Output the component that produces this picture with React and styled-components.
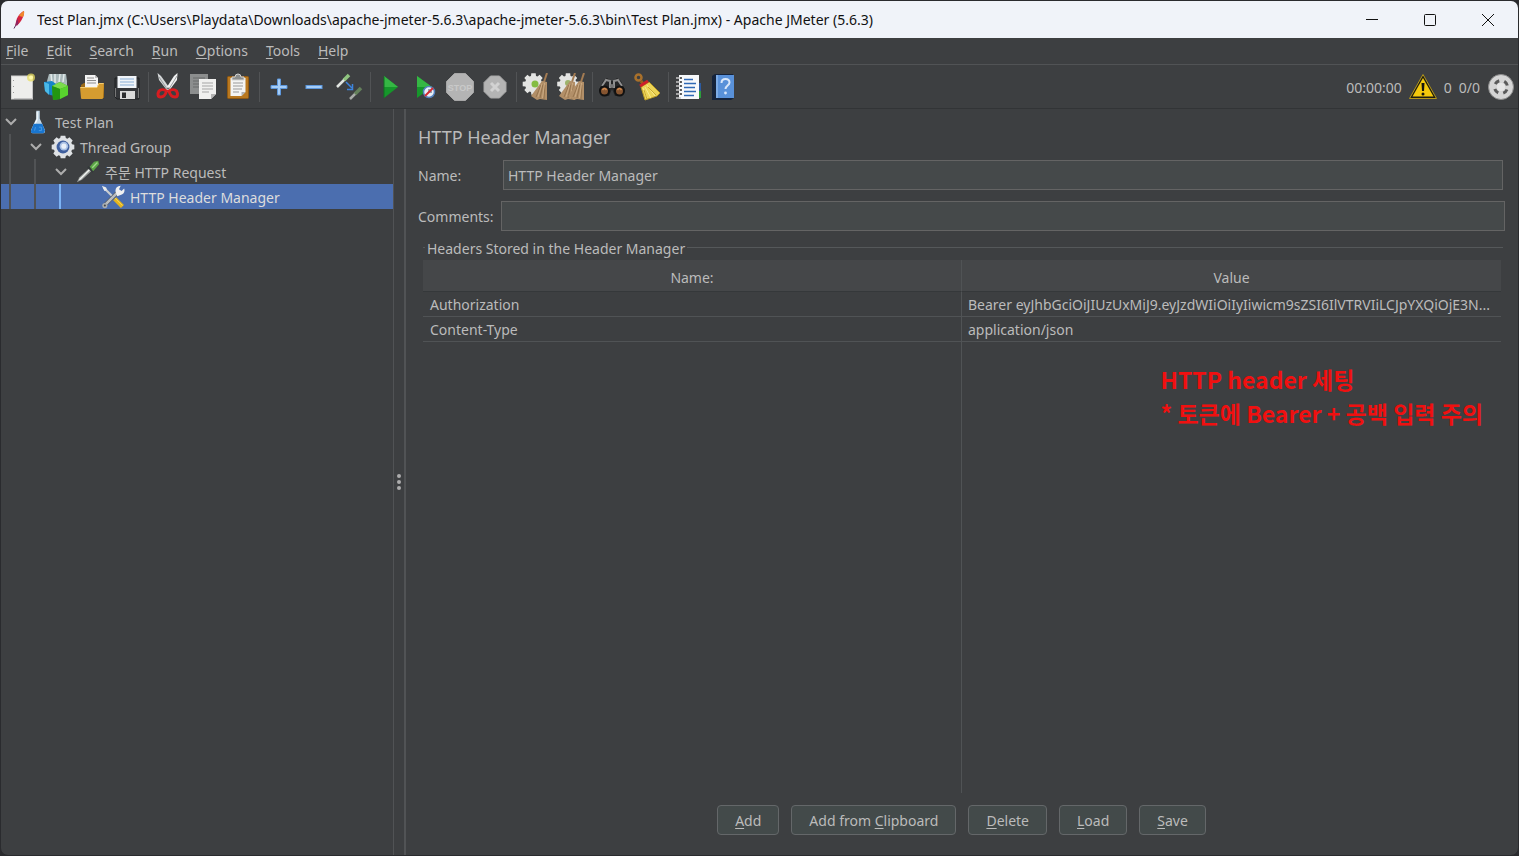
import React, { useState } from 'react'
import styled, { createGlobalStyle } from 'styled-components'

const GlobalStyle = createGlobalStyle`
  *, *::before, *::after {
    box-sizing: border-box;
  }
  body {
    margin: 0;
    background: #2a2b2e;
    font-family: "Noto Sans", "Noto Sans CJK KR", sans-serif;
    font-size: 14px;
    line-height: 20px;
    color: #bbbbbb;
  }
  button, input {
    font: inherit;
    color: inherit;
  }
`

// ---------- icons ----------

const Svg = ({ size = 28, children }) => (
  <svg width={size} height={size} viewBox="0 0 28 28" fill="none" aria-hidden="true">{children}</svg>
)

const gearPath = (cx, cy, outer, inner, teeth = 8) => {
  const points = []
  for (let i = 0; i < teeth; i++) {
    const a = (i / teeth) * Math.PI * 2
    const offsets = [[-0.3, inner], [-0.2, outer], [0.2, outer], [0.3, inner]]
    offsets.forEach(([d, r]) => {
      points.push(`${(cx + Math.cos(a + d) * r).toFixed(1)} ${(cy + Math.sin(a + d) * r).toFixed(1)}`)
    })
  }
  return `M${points.join('L')}Z`
}

const FeatherIcon = () => (
  <svg width="16" height="20" viewBox="0 0 16 20" fill="none" aria-hidden="true">
    <path d="M3 18.500L6 13" stroke="#5b2a5c" strokeWidth="1" />
    <path d="M4.500 15C5 9 7.500 3.500 13 1C13.500 5 11 11 6 15.500Z" fill="#d3223f" />
    <path d="M8 6C9.500 3.500 11 2 13 1C13.400 3 13 5 12 7Z" fill="#f0882c" />
    <path d="M4.500 15C5 12 5.500 10.500 6.500 8.500L7.500 13.500L6 15.500Z" fill="#8d2463" />
  </svg>
)

const NewIcon = () => (
  <Svg>
    <rect x="3.500" y="3" width="21" height="23" fill="#eeeeec" stroke="#d2d2d0" />
    <path d="M5.500 7v1M5.500 13v1M5.500 19v1" stroke="#999" />
    <path d="M6 25.500h18.500V8" stroke="#c3c3c3" />
    <circle cx="23" cy="4.500" r="4" fill="#e8de62" opacity=".75" />
    <circle cx="23" cy="4.500" r="2" fill="#fff8a8" />
  </Svg>
)

const TemplatesIcon = () => (
  <Svg>
    <path d="M4 8L6 1h17l1 7v6H4Z" fill="#a9b8ba" />
    <path d="M8 1l1 9M12 1v9M17 1l-1 8M21 1l-1 8" stroke="#e3eaea" strokeWidth="1.500" />
    <path d="M1 9l8-1 4 3v12l-6-1-5-4Z" fill="#1585c9" />
    <path d="M1 9l5 2v11l-4-4Z" fill="#4bb9e8" />
    <path d="M9 13l8-4 8 4v9l-8 4-7 1Z" fill="#35a51b" />
    <path d="M9 13l8-4 8 4-8 3Z" fill="#7bdc4c" />
    <path d="M17 16l8-3v9l-8 4Z" fill="#58d22e" />
    <path d="M9 13l8 3v10l-7 1Z" fill="#239611" />
  </Svg>
)

const OpenIcon = () => (
  <Svg>
    <path d="M3 12l3-2h18l2 3v12H3Z" fill="#9b6a18" />
    <path d="M7 2h10l3 3v11H7Z" fill="#f4f4f4" />
    <path d="M17 2l3 3h-3Z" fill="#bcbcbc" />
    <path d="M9 5h7M9 7.500h9M9 10h9" stroke="#8e8e8e" />
    <path d="M2 14h17l2-4h5l-1 15q0 1-1 1H4q-1 0-1-1Z" fill="#d59c30" />
    <path d="M2.500 14.500h16.500l2-4h4.500" stroke="#f2cb73" />
  </Svg>
)

const SaveIcon = () => (
  <Svg>
    <path d="M2 5h24v21H4l-2-2Z" fill="#343639" stroke="#1f2022" />
    <rect x="4.500" y="3" width="19" height="12" fill="#f0f4f8" />
    <path d="M7 6h14M7 9h14M7 12h14" stroke="#89aed6" />
    <rect x="7" y="18" width="15" height="8" fill="#d9d9d9" />
    <rect x="9" y="19.500" width="4" height="5.500" fill="#2b2c2e" />
    <path d="M2.500 15v9M25.500 15v10" stroke="#777" />
  </Svg>
)

const CutIcon = () => (
  <Svg>
    <path d="M3.500 0L7 3l10 14-3 1.500L5 7Z" fill="#d5d8d9" />
    <path d="M23.500 0L20 3 11 17l3 2L23 7Z" fill="#f1f2f2" />
    <path d="M23 3l-8 13M5 4l8 12" stroke="#979b9d" />
    <path d="M12.500 18c-2-1.500-5.500-2-7.500 0-1.500 2.500-1.500 6 1.500 6s5-2 6-6Z" stroke="#d81c20" strokeWidth="3" />
    <path d="M15 18c2-1.500 5.500-2 7.500 0 1.500 2.500 1.500 6-1.500 6s-5-2-6-6Z" stroke="#d81c20" strokeWidth="3" />
    <circle cx="14" cy="15.500" r="1" fill="#666" />
  </Svg>
)

const CopyIcon = () => (
  <Svg>
    <path d="M1 1h18v20H1Z" fill="#8c8e8e" />
    <path d="M4 5h12M4 8h12M4 11h6M4 14h6" stroke="#696b6b" />
    <path d="M10 6h17v15l-5 5H10Z" fill="#f0f0ef" />
    <path d="M22 26v-5h5Z" fill="#b3b3b3" />
    <path d="M13 10h11M13 13h11M13 16h11M13 19h7" stroke="#a5a5a5" />
  </Svg>
)

const PasteIcon = () => (
  <Svg>
    <rect x="3.500" y="3.500" width="21" height="22" rx="1" fill="#b9781f" stroke="#8f5812" />
    <path d="M6.500 5h15v14l-4 4h-11Z" fill="#f4f4f3" />
    <path d="M17.500 23v-4h4Z" fill="#b1b1b1" />
    <path d="M9 10h10M9 13h10M9 16h9M9 19h6" stroke="#999" />
    <path d="M8 7V4h3q0-3 3-3t3 3h3v3Z" fill="#8b8e8e" stroke="#d2d3d3" />
  </Svg>
)

const PlusIcon = () => (
  <Svg>
    <path d="M12.500 6h3v6.500H22v3h-6.500V22h-3v-6.500H6v-3h6.500Z" fill="#a5cdf7" stroke="#5d97dc" />
  </Svg>
)

const MinusIcon = () => (
  <Svg>
    <rect x="6" y="12.500" width="16" height="3" fill="#a5cdf7" stroke="#5d97dc" />
  </Svg>
)

const ToggleIcon = () => (
  <Svg>
    <path d="M2 14l8-8" stroke="#e2e6e2" strokeWidth="2.500" />
    <path d="M9 7l5-5" stroke="#8fc47f" strokeWidth="3.500" />
    <path d="M11 9l6 6" stroke="#3d84de" strokeWidth="1.500" />
    <path d="M17.500 11v5.500h-5.500" stroke="#3d84de" strokeWidth="1.500" />
    <path d="M15 26l6-6" stroke="#a9aca9" strokeWidth="2.500" />
    <path d="M20 21l6-6" stroke="#64805b" strokeWidth="3.500" />
  </Svg>
)

const PlayIcon = () => (
  <Svg>
    <path d="M8 3l14 11L8 25Z" fill="#16962b" />
    <path d="M8 3l14 11H8Z" fill="#35b744" />
    <path d="M8 3.500V25" stroke="#0f7020" />
  </Svg>
)

const PlayNoTimersIcon = () => (
  <Svg>
    <path d="M6 3l15 11L6 25Z" fill="#16962b" />
    <path d="M6 3l15 11H6Z" fill="#35b744" />
    <circle cx="18" cy="19" r="5.500" fill="#e9eff8" stroke="#5380bd" strokeWidth="1.500" />
    <path d="M18 16v3h3" stroke="#456" />
    <path d="M14 23l8-8" stroke="#d22b31" strokeWidth="2" />
  </Svg>
)

const StopIcon = () => (
  <Svg>
    <path d="M8.500 0.500h11l8 8v11l-8 8h-11l-8-8v-11Z" fill="#b4b4b4" stroke="#a6a6a6" />
    <text x="14" y="17.500" textAnchor="middle" fontSize="9" fontFamily="Liberation Sans" fontWeight="700" fill="#c9c9c9">STOP</text>
  </Svg>
)

const ShutdownIcon = () => (
  <Svg>
    <path d="M9.500 3h9l6.500 6.500v9L18.500 25h-9L3 18.500v-9Z" fill="#b4b4b4" stroke="#a8a8a8" />
    <path d="M10 10l8 8M18 10l-8 8" stroke="#d2d2d2" strokeWidth="3" />
  </Svg>
)

const Broomlet = ({ x = 0 }) => (
  <g transform={`translate(${x} 0)`}>
    <path d="M25 0l-3 9" stroke="#a37b52" strokeWidth="2" />
    <path d="M20 8l5 1v18l-7-1-3 1-6-4Z" fill="#b28f68" />
    <path d="M19 12l-5 12M21 11l-3 14M23 12l-1 14" stroke="#96744e" />
    <path d="M20 11l-4 13M22.500 10l-2 15" stroke="#cbaa82" />
  </g>
)

const ClearIcon = () => (
  <Svg>
    <path d={gearPath(11.5, 11, 11, 8.5)} fill="#e3e4e2" />
    <circle cx="13" cy="11" r="3.500" fill="#84bd42" />
    <Broomlet />
  </Svg>
)

const ClearAllIcon = () => (
  <Svg>
    <path d={gearPath(11, 11, 11, 8.5)} fill="#e3e4e2" />
    <circle cx="11" cy="10" r="3" fill="#9db36c" />
    <Broomlet x={-7} />
    <Broomlet x={2} />
  </Svg>
)

const SearchIcon = () => (
  <Svg>
    <path d="M5 8l4-3 4 3h2l4-3 4 3 4 9-4 6h-6l-3-7-3 7H5l-4-6Z" fill="#242526" />
    <path d="M4 13l4-6 4 1v7M16 15V8l4-1 4 6" stroke="#8f8f8f" strokeWidth="2" />
    <circle cx="6.500" cy="18" r="4.500" fill="#855430" stroke="#111" strokeWidth="2" />
    <circle cx="21.500" cy="18" r="4.500" fill="#855430" stroke="#111" strokeWidth="2" />
    <path d="M4.500 17q2-3 4 0M19.500 17q2-3 4 0" stroke="#d18b50" strokeWidth="1.500" />
    <circle cx="14" cy="13" r="2" fill="#777" />
  </Svg>
)

const BroomIcon = () => (
  <Svg>
    <path d="M8 8l3 4" stroke="#9a611e" strokeWidth="3" />
    <circle cx="5.500" cy="4.500" r="3" stroke="#a8702b" strokeWidth="2.500" />
    <path d="M8 14l8-5 11 11-3 3-12 4Z" fill="#ecd456" stroke="#b99a25" />
    <path d="M10 15l4 10M12 14l6 11M14 12l8 11" stroke="#f8ea8e" />
    <path d="M11 17l3 9M15 14l8 8" stroke="#c9a82c" />
    <path d="M7 13l8-5" stroke="#ce2029" strokeWidth="3" />
  </Svg>
)

const ListIcon = () => (
  <Svg>
    <path d="M23 10h4v8h-4Z" fill="#2c5ba0" />
    <path d="M23 18h4v7h-4Z" fill="#2c9d3c" />
    <rect x="5" y="2" width="20" height="24" fill="#f7f9fb" />
    <path d="M2 5h5M2 9h5M2 13h5M2 17h5M2 21h5M2 25h5" stroke="#c6c6c6" strokeWidth="1.500" />
    <path d="M6 5h2M6 9h2M6 13h2M6 17h2M6 21h2" stroke="#303030" strokeWidth="1.500" />
    <path d="M10 6.500h9M10 10.500h12M10 14.500h11M10 18.500h12M10 22.500h10" stroke="#2f69b5" strokeWidth="1.500" />
  </Svg>
)

const HelpIcon = () => (
  <Svg>
    <path d="M3 3l3-2h18l1 24-3 2H3Z" fill="#15233b" />
    <rect x="7" y="2" width="18" height="23" fill="#5991d9" />
    <path d="M8 2v23" stroke="#a2c6f2" />
    <path d="M12.500 10q0-4 4-4t4 3.500c0 3-4 3-4 6.500" stroke="#d9e7fa" strokeWidth="2" />
    <circle cx="16.500" cy="20" r="1.400" fill="#d9e7fa" />
  </Svg>
)

const WarningIcon = () => (
  <Svg>
    <path d="M14 1.500L27.500 25.500H.5Z" fill="#1f1d10" stroke="#b6981a" />
    <path d="M14 5L24.500 23.500h-21Z" fill="#f4c90c" />
    <path d="M12.500 10h3l-.500 8h-2Z" fill="#17160e" />
    <circle cx="14" cy="21" r="1.500" fill="#17160e" />
  </Svg>
)

const StatusIcon = () => (
  <Svg>
    <circle cx="14" cy="14" r="12.500" fill="#d5d5d5" stroke="#8d8d8d" />
    <circle cx="14" cy="14" r="6.500" stroke="#5a5a5a" strokeWidth="3" strokeDasharray="5 5.210" strokeDashoffset="-2.600" />
    <circle cx="14" cy="14" r="4" fill="#e6e6e6" />
  </Svg>
)

const FlaskIcon = () => (
  <Svg size={24}>
    <path d="M12 1h4v9l6 13q1 4-2 4H8q-3 0-2-4l6-13Z" fill="#c3d7e6" />
    <path d="M13 2v9l-4 8" stroke="#f7fafc" strokeWidth="1.500" />
    <path d="M9 16h10l3 8q0 3-2 3H8q-3 0-2-3Z" fill="#1976d0" />
    <path d="M11 20l-1 4M15 20h3v4h-3" stroke="#4f9fe6" strokeWidth="1" />
  </Svg>
)

const GearIcon = () => (
  <Svg size={24}>
    <path d={gearPath(14, 14, 13.500, 11)} fill="#dfe2e5" />
    <circle cx="14" cy="14" r="7.500" fill="#3f5f9e" />
    <circle cx="15" cy="13" r="5" fill="#a9c0e4" />
    <circle cx="15" cy="13" r="3" fill="#e9eff8" />
  </Svg>
)

const PipetteIcon = () => (
  <Svg size={24}>
    <path d="M1 26l3-6L16 9l3 3L7 23Z" fill="#9da19e" />
    <path d="M4 23L16 11" stroke="#f4f6f4" strokeWidth="1.500" />
    <path d="M14 8l6 6" stroke="#33383a" strokeWidth="2.500" />
    <path d="M16 8l5-6 5-1 1 4-7 8Z" fill="#5ba346" />
    <path d="M19 9l6-6" stroke="#a0d98a" strokeWidth="1.500" />
  </Svg>
)

const ToolsIcon = () => (
  <Svg size={24}>
    <path d="M3 3l12 12" stroke="#c9cdd0" strokeWidth="2.500" />
    <path d="M1 1l5 2 1 3-3 1Z" fill="#e9ebec" />
    <path d="M16 16l9 9" stroke="#e3b41e" strokeWidth="5" />
    <path d="M16 15l9 9" stroke="#f8dc64" />
    <path d="M3 25L20 8" stroke="#555b60" strokeWidth="4.500" />
    <path d="M3 25L20 8" stroke="#b9bdc0" strokeWidth="3" />
    <path d="M17 8q-1-6 6-7l-2 4 3 2 3-3q2 6-5 8l-3 1Z" fill="#eff0f1" />
    <circle cx="4.500" cy="24" r="3" fill="#a8adb1" />
    <circle cx="4.500" cy="24" r="1.200" fill="#444" />
  </Svg>
)

const Chevron = () => (
  <svg width="12" height="8" viewBox="0 0 12 8" fill="none" aria-hidden="true">
    <path d="M1 1l5 5 5-5" stroke="#adadad" strokeWidth="2" />
  </svg>
)

// ---------- data ----------

const menus = ['File', 'Edit', 'Search', 'Run', 'Options', 'Tools', 'Help']

const toolGroups = [
  [['New', NewIcon], ['Templates', TemplatesIcon], ['Open', OpenIcon], ['Save', SaveIcon]],
  [['Cut', CutIcon], ['Copy', CopyIcon], ['Paste', PasteIcon]],
  [['Expand All', PlusIcon], ['Collapse All', MinusIcon], ['Toggle', ToggleIcon]],
  [['Start', PlayIcon], ['Start no pauses', PlayNoTimersIcon], ['Stop', StopIcon], ['Shutdown', ShutdownIcon]],
  [['Clear', ClearIcon], ['Clear All', ClearAllIcon]],
  [['Search', SearchIcon], ['Reset Search', BroomIcon]],
  [['Function Helper Dialog', ListIcon], ['Help', HelpIcon]],
]

const treeNodes = [
  { label: 'Test Plan', icon: FlaskIcon, level: 0, open: true },
  { label: 'Thread Group', icon: GearIcon, level: 1, open: true },
  { label: '주문 HTTP Request', icon: PipetteIcon, level: 2, open: true },
  { label: 'HTTP Header Manager', icon: ToolsIcon, level: 3 },
]

const headers = [
  { name: 'Authorization', value: 'Bearer eyJhbGciOiJIUzUxMiJ9.eyJzdWIiOiIyIiwicm9sZSI6IlVTRVIiLCJpYXQiOjE3N...' },
  { name: 'Content-Type', value: 'application/json' },
]

// [before, mnemonic, after]
const actions = [
  ['', 'A', 'dd'],
  ['Add from ', 'C', 'lipboard'],
  ['', 'D', 'elete'],
  ['', 'L', 'oad'],
  ['', 'S', 'ave'],
]

const App = () => {
  const [selected, setSelected] = useState(3)
  const [name, setName] = useState('HTTP Header Manager')
  const [comments, setComments] = useState('')

  return (
    <Window>
      <GlobalStyle />

      <TitleBar>
        <FeatherIcon />
        <WindowTitle>Test Plan.jmx (C:\Users\Playdata\Downloads\apache-jmeter-5.6.3\apache-jmeter-5.6.3\bin\Test Plan.jmx) - Apache JMeter (5.6.3)</WindowTitle>
        <WindowButton aria-label="Minimize">
          <svg width="12" height="12" viewBox="0 0 12 12"><path d="M0 5.500h12" stroke="#111" /></svg>
        </WindowButton>
        <WindowButton aria-label="Maximize">
          <svg width="12" height="12" viewBox="0 0 12 12"><rect x=".5" y=".5" width="11" height="11" rx="1" fill="none" stroke="#111" /></svg>
        </WindowButton>
        <WindowButton aria-label="Close">
          <svg width="12" height="12" viewBox="0 0 12 12"><path d="M0 0l12 12M12 0L0 12" stroke="#111" /></svg>
        </WindowButton>
      </TitleBar>

      <MenuBar>
        {menus.map((menu) => (
          <MenuButton key={menu}><Mnemonic>{menu[0]}</Mnemonic>{menu.slice(1)}</MenuButton>
        ))}
      </MenuBar>

      <Toolbar>
        {toolGroups.map((group, i) => (
          <ToolGroup key={i}>
            {group.map(([label, Icon]) => (
              <ToolButton key={label} aria-label={label} title={label}><Icon /></ToolButton>
            ))}
          </ToolGroup>
        ))}
        <Status>
          <span>00:00:00</span>
          <WarningIcon />
          <span>0</span>
          <span>0/0</span>
          <StatusIcon />
        </Status>
      </Toolbar>

      <Main>
        <Tree>
          {treeNodes.map(({ label, icon: Icon, level, open }, i) => (
            <TreeRow key={label} $selected={selected === i} onClick={() => setSelected(i)}>
              {Array.from({ length: level }, (_, n) => (
                <Guide key={n} $active={selected === i && n === level - 1} />
              ))}
              <Toggle>{open && <Chevron />}</Toggle>
              <Icon />
              <TreeLabel>{label}</TreeLabel>
            </TreeRow>
          ))}
        </Tree>

        <Divider>
          <Dot /><Dot /><Dot />
        </Divider>

        <Panel>
          <PanelTitle>HTTP Header Manager</PanelTitle>
          <Field>
            <FieldLabel htmlFor="name" $wide>Name:</FieldLabel>
            <TextInput id="name" value={name} onChange={(e) => setName(e.target.value)} />
          </Field>
          <Field $outer>
            <FieldLabel htmlFor="comments">Comments:</FieldLabel>
            <TextInput id="comments" value={comments} onChange={(e) => setComments(e.target.value)} />
          </Field>

          <GroupTitle id="headers-title">Headers Stored in the Header Manager</GroupTitle>
          <TableArea>
            <HeaderTable aria-labelledby="headers-title">
              <thead>
                <tr>
                  <th>Name:</th>
                  <th>Value</th>
                </tr>
              </thead>
              <tbody>
                {headers.map((header) => (
                  <tr key={header.name}>
                    <td>{header.name}</td>
                    <td>{header.value}</td>
                  </tr>
                ))}
              </tbody>
            </HeaderTable>
            <EmptyColumns><span /><span /></EmptyColumns>
            <Note>
              HTTP header 세팅<br />
              * 토큰에 Bearer + 공백 입력 주의
            </Note>
          </TableArea>

          <Actions>
            {actions.map(([before, key, after]) => (
              <ActionButton key={before + key + after}>{before}<Mnemonic>{key}</Mnemonic>{after}</ActionButton>
            ))}
          </Actions>
        </Panel>
      </Main>
    </Window>
  )
}

const Window = styled.div`
  display: flex;
  flex-direction: column;
  min-height: 100vh;
  border: 1px solid #2a2b2e;
  border-radius: 8px;
  overflow: hidden;
  background: #3d3f41;
`
const TitleBar = styled.header`
  display: flex;
  align-items: center;
  height: 37px;
  padding: 0 1px 0 10px;
  background: #f0f3f9;
  color: #111;
`
const WindowTitle = styled.div`
  flex: 1;
  min-width: 0;
  margin-left: 10px;
  white-space: nowrap;
  overflow: hidden;
`
const WindowButton = styled.button`
  display: flex;
  align-items: center;
  justify-content: center;
  width: 58px;
  height: 100%;
  padding: 0;
  border: none;
  background: none;
  &:hover {
    background: #dfe3ea;
  }
`
const MenuBar = styled.nav`
  display: flex;
  gap: 18px;
  height: 27px;
  padding-left: 5px;
  border-bottom: 1px solid #515355;
`
const MenuButton = styled.button`
  padding: 0;
  border: none;
  background: none;
`
const Mnemonic = styled.span`
  text-decoration: underline;
  text-decoration-thickness: 1px;
  text-underline-offset: 2px;
`
const Toolbar = styled.div`
  display: flex;
  align-items: center;
  height: 44px;
  padding: 1px 3px 0;
  border-bottom: 1px solid #323436;
`
const ToolGroup = styled.div`
  display: flex;
  & + &::before {
    content: "";
    width: 1px;
    margin: 0 1px 0 4px;
    background: #515355;
  }
`
const ToolButton = styled.button`
  display: flex;
  align-items: center;
  justify-content: center;
  width: 35px;
  height: 30px;
  padding: 0;
  border: none;
  background: none;
`
const Status = styled.div`
  display: flex;
  align-items: center;
  gap: 7px;
  margin-left: auto;
  white-space: nowrap;
  span {
    padding-top: 2px;
  }
`
const Main = styled.main`
  display: flex;
  flex: 1;
`
const Tree = styled.div`
  flex: 0 0 392px;
`
const TreeRow = styled.div`
  display: flex;
  align-items: center;
  height: 25px;
  background: ${({ $selected }) => ($selected ? '#4b6eaf' : 'transparent')};
  color: ${({ $selected }) => ($selected ? '#dddddd' : 'inherit')};
`
const Guide = styled.span`
  width: 25px;
  height: 100%;
  padding-left: 8px;
  &::before {
    content: "";
    display: block;
    width: 2px;
    height: 100%;
    background: ${({ $active }) => ($active ? '#7db4f5' : '#515355')};
  }
`
const Toggle = styled.span`
  display: flex;
  width: 25px;
  padding-left: 4px;
`
const TreeLabel = styled.span`
  margin-left: 5px;
  padding-top: 2px;
  white-space: nowrap;
`
const Divider = styled.div`
  display: flex;
  flex-direction: column;
  align-items: center;
  justify-content: center;
  gap: 2px;
  flex: 0 0 13px;
  border-left: 1px solid #515355;
  border-right: 2px solid #515355;
  cursor: col-resize;
`
const Dot = styled.span`
  width: 4px;
  height: 4px;
  border-radius: 2px;
  background: #adadad;
`
const Panel = styled.section`
  display: flex;
  flex-direction: column;
  flex: 1;
  min-width: 0;
  padding: 14px 13px 20px 12px;
`
const PanelTitle = styled.h1`
  margin: 0 0 7px;
  font-size: 18px;
  font-weight: 400;
  line-height: 28px;
`
const Field = styled.div`
  display: flex;
  align-items: center;
  height: 30px;
  margin: ${({ $outer }) => ($outer ? '11px 0 0' : '2px 2px 0 0')};
`
const FieldLabel = styled.label`
  width: ${({ $wide }) => ($wide ? '85px' : '83px')};
  padding-top: 2px;
`
const TextInput = styled.input`
  flex: 1;
  min-width: 0;
  height: 30px;
  padding: 0 4px;
  border: 1px solid #646464;
  border-radius: 0;
  background: #45494a;
  outline: none;
`
const GroupTitle = styled.h2`
  display: flex;
  gap: 2px;
  margin: 7px 2px 1px 5px;
  font-size: 14px;
  font-weight: 400;
  line-height: 21px;
  &::before, &::after {
    content: "";
    width: 2px;
    height: 1px;
    margin-top: 9px;
    background: #55585a;
  }
  &::after {
    flex: 1;
  }
`
const TableArea = styled.div`
  position: relative;
  display: flex;
  flex-direction: column;
  flex: 1;
  margin: 0 4px 0 5px;
`
const HeaderTable = styled.table`
  width: 100%;
  table-layout: fixed;
  border-collapse: separate;
  border-spacing: 0;
  th {
    height: 32px;
    padding: 4px 0 0;
    font-weight: 400;
    background: #454749;
    border-bottom: 1px solid #35383a;
  }
  td {
    height: 25px;
    padding: 2px 0 0 7px;
    border-bottom: 1px solid #505355;
    white-space: nowrap;
    overflow: hidden;
  }
  th:first-child, td:first-child {
    border-right: 1px solid #505355;
  }
  td + td {
    padding-left: 6px;
  }
`
const EmptyColumns = styled.div`
  display: grid;
  grid-template-columns: 1fr 1fr;
  flex: 1;
  span:first-child {
    border-right: 1px solid #505355;
  }
`
const Note = styled.p`
  position: absolute;
  top: 102px;
  right: 18px;
  margin: 0;
  font-family: "Noto Sans CJK KR", sans-serif;
  font-size: 23px;
  font-weight: 700;
  line-height: 34px;
  color: #f01010;
  white-space: nowrap;
`
const Actions = styled.div`
  display: flex;
  justify-content: center;
  gap: 12px;
  margin-top: 12px;
`
const ActionButton = styled.button`
  height: 30px;
  padding: 1px 17px 0;
  border: 1px solid #646769;
  border-radius: 4px;
  background: #434a4a;
  white-space: nowrap;
  &:hover {
    background: #4c5354;
  }
`

export default App
